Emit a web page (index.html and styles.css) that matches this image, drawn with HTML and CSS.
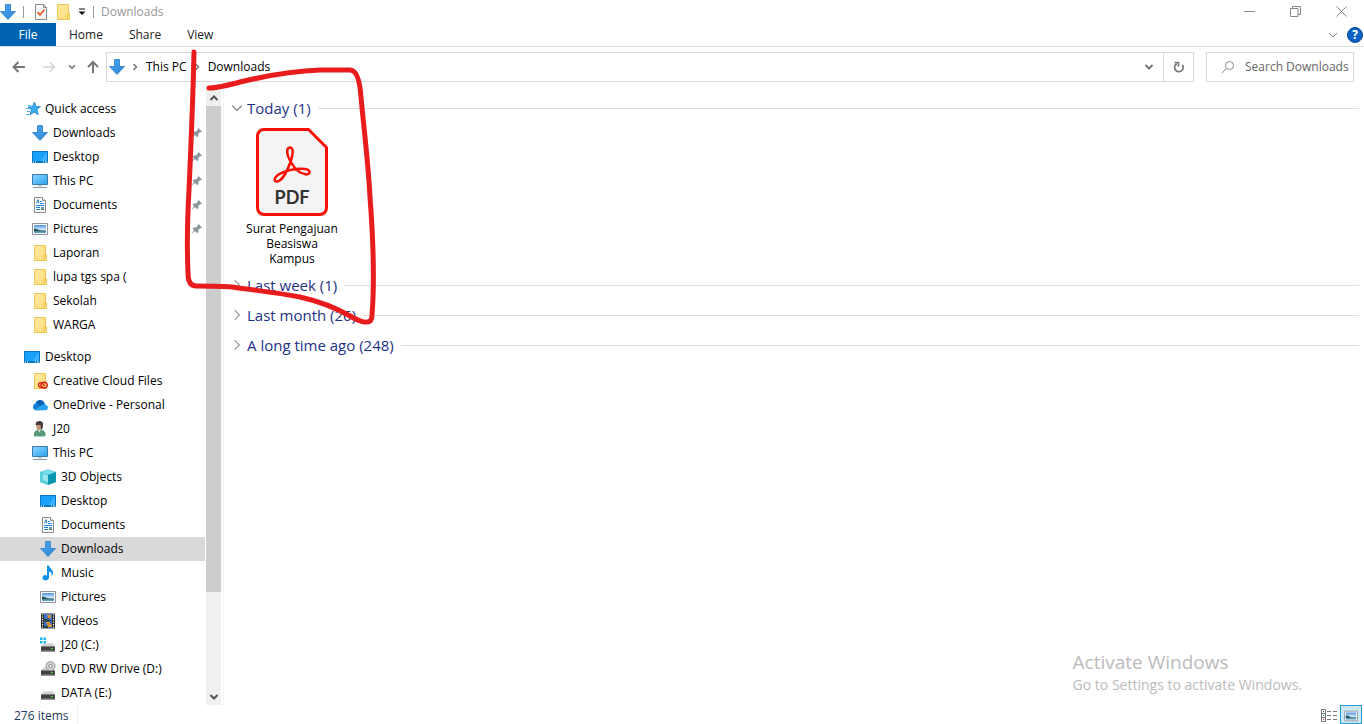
FILE: index.html
```html
<!DOCTYPE html>
<html lang="en">
<head>
<meta charset="utf-8">
<title>Downloads</title>
<meta name="viewport" content="width=device-width, initial-scale=1">
<link rel="stylesheet" href="styles.css">
</head>
<body>
<svg class="sprite" aria-hidden="true">
  <defs>
    <linearGradient id="g-arrow" x1="0" y1="0" x2="1" y2="1"><stop offset="0" stop-color="#4aa8f0"/><stop offset="1" stop-color="#2b86d8"/></linearGradient>
    <linearGradient id="g-screen" x1="0" y1="0" x2="1" y2="1"><stop offset="0" stop-color="#8fd3fb"/><stop offset=".5" stop-color="#5bbcf8"/><stop offset="1" stop-color="#2ea3f2"/></linearGradient>
    <linearGradient id="g-folder" x1="0" y1="0" x2="1" y2="1"><stop offset="0" stop-color="#ffeaa0"/><stop offset="1" stop-color="#fbdc7c"/></linearGradient>
    <linearGradient id="g-photo" x1="0" y1="0" x2="0" y2="1"><stop offset="0" stop-color="#4c8fe6"/><stop offset=".6" stop-color="#d8f0fa"/><stop offset=".8" stop-color="#8fc3dc"/><stop offset="1" stop-color="#4c93c0"/></linearGradient>
    <linearGradient id="g-drive" x1="0" y1="0" x2="0" y2="1"><stop offset="0" stop-color="#e4e4e4"/><stop offset="1" stop-color="#bdbdbd"/></linearGradient>
    <symbol id="i-down" viewBox="0 0 16 16"><path d="M5.5.5h5v7h5L8 15.5.5 7.500h5z" fill="url(#g-arrow)" stroke="#2c7fc9" stroke-width=".8"/></symbol>
    <symbol id="i-desktop" viewBox="0 0 16 16"><path d="M0 2h16v12H0z" fill="#0a76c4"/><path d="M1 3h14v9H1z" fill="#19a0fb"/><path d="M8 12 15 3v9z" fill="#3ab0ff"/><path d="M1 13h1M3 13h1M11 13h1M13 13h2" stroke="#fff"/></symbol>
    <symbol id="i-pc" viewBox="0 0 16 16"><path d="M.5 1.500h15v10H.5z" fill="url(#g-screen)" stroke="#3a7ca8"/><path d="M6 12h4v1.500H6z" fill="#b7c6d1"/><path d="M1 14.500h14" stroke="#8299a9"/></symbol>
    <symbol id="i-doc" viewBox="0 0 16 16"><path d="M2.500.5h8l3 3v12h-11z" fill="#fff" stroke="#8b8b8b"/><path d="M10.500.5v3h3" fill="#eee" stroke="#8b8b8b"/><path d="m4.500 6.500 1.500-4 1 4M8 4.500h2M8 6.500h4M4 8.500h8M4 10.500h4M4 12.500h4" stroke="#2483cf" fill="none"/><path d="M9 10h3v1.500H9z" fill="#4d9be0"/><path d="M9 11.500h3V13H9z" fill="#3d8068"/></symbol>
    <symbol id="i-pic" viewBox="0 0 16 16"><path d="M.5 2.500h15v11H.5z" fill="#fff" stroke="#8d949b"/><path d="M2 4h12v8H2z" fill="url(#g-photo)"/><path d="M2 7.500q3 0 5 1.500 3 .8 7 .5v1H2z" fill="#21565c"/></symbol>
    <symbol id="i-folder" viewBox="0 0 16 16"><path d="M2.500.5h11v9h1v6h-12z" fill="url(#g-folder)" stroke="#ebc651"/><path d="M12.500 15V10.500h2" fill="none" stroke="#ebc651"/></symbol>
    <symbol id="i-star" viewBox="0 0 16 16"><path d="M8.500 1 10 5.500l4.500.2-3.600 2.900 1.300 5.200L8 11l-4 3 1.500-5L2 6l4.500-.4z" fill="#35adf0" stroke="#1478bd" stroke-width=".7"/><path d="M2 4.500h3M0 7.500h3M1 10.500h3M0 13.500h3" stroke="#4cb0ec"/></symbol>
    <symbol id="i-cc" viewBox="0 0 16 16"><use href="#i-folder"/><g fill="none" stroke="#e01b12" stroke-width="1.400"><path d="M11 10.500C9 8.800 6.300 10 6.400 12c.1 2.500 3 3 4.600 2.200"/><path d="M9 12.500c0-4 6-4.500 6.300-.5.200 3.500-4 3.700-5.300 2L8.300 12"/><path d="m10.800 11.300 2.200 1.700"/></g></symbol>
    <symbol id="i-cloud" viewBox="0 0 16 16"><path d="M3.500 6.500A4.800 4.800 0 0 1 12.500 6L14 10 4 11z" fill="#0762b4"/><path d="M3.500 13.200A3.400 3.400 0 1 1 5.500 6.500L12 13z" fill="#1281d8"/><path d="M2.500 13 10.500 7.500A3.500 3.500 0 0 1 15 8.800a2.500 2.500 0 0 1-1.800 4.400H3.500z" fill="#289ff0"/></symbol>
    <symbol id="i-user" viewBox="0 0 16 16"><path d="M2 15.500V12q1-3 4-3.500l3-.2q4 1.500 4.500 4.500v2.200q-5 1-8 .3z" fill="#559b79"/><path d="m5.500 8.500 2 3 1.500-3" fill="#e9e3d6"/><ellipse cx="7" cy="5" rx="2.800" ry="4" fill="#c29273"/><path d="M3.500 4q0-4 4-4t3.500 4q0 4-2 4.500L8.500 4z" fill="#4b3e38"/></symbol>
    <symbol id="i-cube" viewBox="0 0 16 16"><path d="m8 .5 8 2.500v10l-8 3-8-3V3z" fill="#19a7c0"/><path d="m8 .5 8 2.500-8 3-8-3z" fill="#76deec"/><path d="m0 3 8 3v10l-8-3z" fill="#5ccfdf"/><path d="m3 5 5 1.800V13l-5-2z" fill="#b8eef4" opacity=".7"/><path d="M8 6v10l8-3V3z" fill="#078fa9" opacity=".75"/></symbol>
    <symbol id="i-music" viewBox="0 0 16 16"><path d="M7 .5h2c.3 3 4.500 4 4 7.500 0 1.500-.8 2.500-1.500 3 .7-2.500-.5-4-2.500-4.500v6.300a3.300 2.600 0 1 1-2-2.400z" fill="#0d92e8"/></symbol>
    <symbol id="i-video" viewBox="0 0 16 16"><path d="M1 .5h14v15H1z" fill="#303236"/><path d="M4 1h8v6.500H4zM4 8.500h8V15H4z" fill="#3d72ca"/><path d="M2.500 1v14M13.500 1v14" stroke="#fff" stroke-dasharray="1.200 1.300"/><path d="M7 2h4v3H8zM6 9h4v2l2 1v2H8z" fill="#d9922e"/><path d="M4 6h5v1.500H4zM4 13h4v2H4z" fill="#274735"/></symbol>
    <symbol id="i-drive" viewBox="0 0 16 16"><path d="M3.500 6h9.500l2 4H1z" fill="url(#g-drive)"/><path d="M1 9.500h14v5H1z" fill="#424242"/><path d="M1 14h14" stroke="#8b8b8b"/><path d="M11 11.500h2" stroke="#40e052"/></symbol>
    <symbol id="i-windrive" viewBox="0 0 16 16"><use href="#i-drive"/><path d="M0 0h7v7H0z" fill="#fff"/><path d="M0 .5h2.500V3H0zM3.500.5H6V3H3.500zM0 4h2.500v2.500H0zM3.500 4H6v2.500H3.500z" fill="#1ab7ea"/></symbol>
    <symbol id="i-dvd" viewBox="0 0 16 16"><use href="#i-drive"/><circle cx="10.500" cy="5" r="4.500" fill="#d1d4d6" stroke="#999"/><circle cx="10.500" cy="5" r="1.600" fill="#fff" stroke="#888"/></symbol>
    <symbol id="i-pin" viewBox="0 0 12 12"><path d="m7.500 1 3.500 3.500-1 .8-.8-.2L7.300 7v2.300l-1 .9L4 8 .5 11.500 3 7 1.500 5.500l1-1h2.300L6.900 2.700l-.2-.8z" fill="#8b979f"/></symbol>
    <symbol id="i-props" viewBox="0 0 16 16"><path d="M2.500.5h8l3 3v12h-11z" fill="#f7f7f9" stroke="#8a8a8a"/><path d="M10.500.5v3h3" fill="none" stroke="#8a8a8a"/><path d="m4.500 8 2.500 3 4.500-5.500" fill="none" stroke="#e8581c" stroke-width="1.700"/></symbol>
    <symbol id="i-chev" viewBox="0 0 10 10"><path d="m1 3 4 4 4-4" fill="none" stroke="currentColor"/></symbol>
    <symbol id="i-chevb" viewBox="0 0 10 10"><path d="m1.500 3 3.500 3.500L8.500 3" fill="none" stroke="currentColor" stroke-width="2"/></symbol>
    <symbol id="i-right" viewBox="0 0 10 10"><path d="m3.500 2 3 3-3 3" fill="none" stroke="currentColor" stroke-width="1.500"/></symbol>
  </defs>
</svg>

<div class="window">
  <header class="titlebar">
    <svg class="icon"><use href="#i-down"/></svg>
    <span class="bar"></span>
    <button class="quick" aria-label="Properties"><svg class="icon"><use href="#i-props"/></svg></button>
    <button class="quick" aria-label="New folder"><svg class="icon"><use href="#i-folder"/></svg></button>
    <button class="quick quick-more" aria-label="Customize toolbar"><svg width="8" height="8" viewBox="0 0 8 8"><path d="M1 1h6" stroke="#111" stroke-width="1"/><path d="M.5 3.500h7L4 7z" fill="#111"/></svg></button>
    <span class="bar bar-title"></span>
    <h1 class="title">Downloads</h1>
    <div class="controls">
      <button aria-label="Minimize"><svg width="11" height="11"><path d="M0 5.500h11" stroke="#888"/></svg></button>
      <button aria-label="Restore"><svg width="11" height="11" fill="none" stroke="#888"><path d="M.5 2.500h7.500v8H.5zM2.500 2.500v-2h8v8H8"/></svg></button>
      <button aria-label="Close"><svg width="11" height="11" stroke="#888"><path d="m.5.5 10 10M10.500.5l-10 10"/></svg></button>
    </div>
  </header>

  <nav class="ribbon" aria-label="Ribbon">
    <button class="tab tab-file">File</button>
    <button class="tab">Home</button>
    <button class="tab">Share</button>
    <button class="tab">View</button>
    <button class="expand" aria-label="Expand ribbon"><svg class="chev"><use href="#i-chev"/></svg></button>
    <button class="help" aria-label="Help">?</button>
  </nav>

  <div class="toolbar">
    <div class="history">
      <button aria-label="Back"><svg width="14" height="12" fill="none" stroke="#777" stroke-width="2"><path d="M1.500 6H13M6.500 1 1.500 6l5 5"/></svg></button>
      <button aria-label="Forward"><svg width="14" height="12" fill="none" stroke="#d6d6d6" stroke-width="1.500"><path d="M1 6h11.500M7.500 1l5 5-5 5"/></svg></button>
      <button class="recent" aria-label="Recent locations"><svg width="8" height="8" viewBox="0 0 10 10"><use href="#i-chevb"/></svg></button>
      <button class="up" aria-label="Up"><svg width="12" height="14" fill="none" stroke="#777" stroke-width="2"><path d="M6 13V2M1 7l5-5 5 5"/></svg></button>
    </div>
    <div class="address">
      <svg class="icon"><use href="#i-down"/></svg>
      <svg class="crumb-sep"><use href="#i-right"/></svg>
      <a href="#pc">This PC</a>
      <svg class="crumb-sep"><use href="#i-right"/></svg>
      <a href="#downloads">Downloads</a>
      <button class="drop" aria-label="Previous locations"><svg class="chev"><use href="#i-chevb"/></svg></button>
      <button class="refresh" aria-label="Refresh"><svg width="12" height="12" fill="none" stroke="#777" stroke-width="1.700"><path d="M9.300 3.800a4.300 4.300 0 1 1-5.600-1.100"/><path d="M1.500 1.500h4v4"/></svg></button>
    </div>
    <label class="search">
      <svg width="14" height="14" fill="none" stroke="#8a8a8a"><circle cx="8.500" cy="5.500" r="4"/><path d="M5.700 8.300.8 13.200"/></svg>
      <input type="text" placeholder="Search Downloads" aria-label="Search Downloads">
    </label>
  </div>

  <div class="body">
    <nav class="tree" aria-label="Folders">
      <ul class="branch">
        <li><a class="star" href="#quick"><svg class="icon"><use href="#i-star"/></svg>Quick access</a></li>
        <li><a class="l2" href="#q1"><svg class="icon"><use href="#i-down"/></svg>Downloads<svg class="pin"><use href="#i-pin"/></svg></a></li>
        <li><a class="l2" href="#q2"><svg class="icon"><use href="#i-desktop"/></svg>Desktop<svg class="pin"><use href="#i-pin"/></svg></a></li>
        <li><a class="l2" href="#q3"><svg class="icon"><use href="#i-pc"/></svg>This PC<svg class="pin"><use href="#i-pin"/></svg></a></li>
        <li><a class="l2" href="#q4"><svg class="icon"><use href="#i-doc"/></svg>Documents<svg class="pin"><use href="#i-pin"/></svg></a></li>
        <li><a class="l2" href="#q5"><svg class="icon"><use href="#i-pic"/></svg>Pictures<svg class="pin"><use href="#i-pin"/></svg></a></li>
        <li><a class="l2" href="#q6"><svg class="icon"><use href="#i-folder"/></svg>Laporan</a></li>
        <li><a class="l2" href="#q7"><svg class="icon"><use href="#i-folder"/></svg>lupa tgs spa (</a></li>
        <li><a class="l2" href="#q8"><svg class="icon"><use href="#i-folder"/></svg>Sekolah</a></li>
        <li><a class="l2" href="#q9"><svg class="icon"><use href="#i-folder"/></svg>WARGA</a></li>
      </ul>
      <ul class="branch">
        <li><a href="#d0"><svg class="icon"><use href="#i-desktop"/></svg>Desktop</a></li>
        <li><a class="l2" href="#d1"><svg class="icon"><use href="#i-cc"/></svg>Creative Cloud Files</a></li>
        <li><a class="l2" href="#d2"><svg class="icon"><use href="#i-cloud"/></svg>OneDrive - Personal</a></li>
        <li><a class="l2" href="#d3"><svg class="icon"><use href="#i-user"/></svg>J20</a></li>
        <li><a class="l2" href="#pc"><svg class="icon"><use href="#i-pc"/></svg>This PC</a></li>
        <li><a class="l3" href="#p1"><svg class="icon"><use href="#i-cube"/></svg>3D Objects</a></li>
        <li><a class="l3" href="#p2"><svg class="icon"><use href="#i-desktop"/></svg>Desktop</a></li>
        <li><a class="l3" href="#p3"><svg class="icon"><use href="#i-doc"/></svg>Documents</a></li>
        <li><a class="l3 selected" href="#downloads" aria-current="page"><svg class="icon"><use href="#i-down"/></svg>Downloads</a></li>
        <li><a class="l3" href="#p5"><svg class="icon"><use href="#i-music"/></svg>Music</a></li>
        <li><a class="l3" href="#p6"><svg class="icon"><use href="#i-pic"/></svg>Pictures</a></li>
        <li><a class="l3" href="#p7"><svg class="icon"><use href="#i-video"/></svg>Videos</a></li>
        <li><a class="l3" href="#p8"><svg class="icon"><use href="#i-windrive"/></svg>J20 (C:)</a></li>
        <li><a class="l3" href="#p9"><svg class="icon"><use href="#i-dvd"/></svg>DVD RW Drive (D:)</a></li>
        <li><a class="l3" href="#p10"><svg class="icon"><use href="#i-drive"/></svg>DATA (E:)</a></li>
      </ul>
    </nav>
    <div class="scroll">
      <button aria-label="Scroll up"><svg class="chev flip"><use href="#i-chevb"/></svg></button>
      <div class="track"><div class="thumb"></div></div>
      <button aria-label="Scroll down"><svg class="chev"><use href="#i-chevb"/></svg></button>
    </div>
    <main class="files">
      <section>
        <h2 class="group"><button><svg class="caret"><use href="#i-chev"/></svg>Today (1)</button></h2>
        <a class="file" href="#file">
          <svg width="72" height="88" viewBox="0 0 72 88">
            <path d="M8 1.500h44.500L70.500 19.500V80a6.500 6.500 0 0 1-6.500 6.500H8A6.500 6.500 0 0 1 1.500 80V8A6.500 6.500 0 0 1 8 1.500z" fill="#f4f4f4" stroke="#fa0f00" stroke-width="3"/>
            <path d="M34 19.500C29.500 20 31 27 34 32.500 38 40 44 46 50.500 46.500 55 46.500 54.500 41.500 49 41 40 40 29 42.500 22.500 46.500 18 49.500 17.500 53.500 21 53.500 26.500 53 32 41 34.500 34 37 27 38 19.500 34 19.500z" fill="none" stroke="#fa0f00" stroke-width="2.500" stroke-linejoin="round"/>
            <text class="pdf" x="36" y="76" text-anchor="middle">PDF</text>
          </svg>
          <span>Surat Pengajuan Beasiswa Kampus</span>
        </a>
      </section>
      <h2 class="group"><button><svg class="caret closed"><use href="#i-chev"/></svg>Last week (1)</button></h2>
      <h2 class="group"><button><svg class="caret closed"><use href="#i-chev"/></svg>Last month (26)</button></h2>
      <h2 class="group"><button><svg class="caret closed"><use href="#i-chev"/></svg>A long time ago (248)</button></h2>
    </main>
  </div>

  <footer class="status">
    <span class="count">276 items</span>
    <div class="views">
      <button aria-label="Details view"><svg width="17" height="13" fill="none" stroke="#777"><path d="M.5.5h4v12h-4zM.5 4.500h4M.5 8.500h4M6 2.500h4M12 2.500h4M6 6.500h4M12 6.500h4M6 10.500h4M12 10.500h4"/><path d="M2 2.500h1M2 6.500h1" stroke="#357"/><path d="M2 10.500h1" stroke="#d33"/></svg></button>
      <button class="active" aria-label="Large icons view"><svg width="14" height="14" viewBox="0 0 16 16"><use href="#i-pic"/></svg></button>
    </div>
  </footer>

  <aside class="watermark">
    <p class="wm-title">Activate Windows</p>
    <p class="wm-text">Go to Settings to activate Windows.</p>
  </aside>
  <svg class="marker" width="400" height="340" viewBox="0 0 400 340" aria-hidden="true">
    <path d="M194 52C193 100 191 145 189 190C187 225 187 250 188 273Q188 286 196 286C210 286 222 286 232 287C260 291 280 293 300 297C322 302 338 309 350 316Q362 323 367 322Q372 322 372 315C374 290 374 250 370 197C368 160 364 130 361 97Q359 70 350 70H320C290 71 265 76 240 82Q218 88 209 88"/>
  </svg>
</div>
</body>
</html>
```
FILE: styles.css
```css
* { box-sizing: border-box; }

body {
  margin: 0;
  background: #fff;
  color: #000;
  font: 12px/16px "Open Sans", "Noto Sans", sans-serif;
}

button, input {
  margin: 0;
  padding: 0;
  border: 0;
  background: none;
  color: inherit;
  font: inherit;
}

button { display: flex; align-items: center; justify-content: center; }
a { color: inherit; text-decoration: none; }
h1, h2, p, ul { margin: 0; padding: 0; font-weight: 400; }
ul { list-style: none; }
svg { display: block; flex: none; }

.sprite { position: absolute; width: 0; height: 0; }
.icon { width: 16px; height: 16px; }
.chev { width: 10px; height: 10px; }
.flip { transform: rotate(180deg); }

.window {
  position: relative;
  display: flex;
  flex-direction: column;
  height: 100vh;
  overflow: hidden;
}

.titlebar { display: flex; align-items: center; height: 23px; }
.bar { width: 1px; height: 12px; margin: 0 8px 0 7px; background: #999; }
.quick { width: 16px; height: 16px; margin-right: 6px; }
.titlebar .quick:first-of-type { margin-left: 1px; }
.quick-more { width: 10px; margin: 0; }
.bar-title { margin: 0 7px 0 6px; }
.title { color: #999; font-size: 12px; line-height: 16px; }
.controls { display: flex; margin-left: auto; }
.controls button { width: 46px; height: 20px; }

.ribbon { display: flex; height: 24px; border-bottom: 1px solid #dadbdc; color: #222; }
.tab { padding: 0 13px; }
.tab-file { width: 56px; padding: 0; background: #0063b1; color: #fff; }
.expand { width: 24px; margin-left: auto; margin-right: 2px; color: #888; }
.help {
  align-self: center;
  width: 16px;
  height: 16px;
  margin-right: 1px;
  border: 1px solid #0a4a94;
  border-radius: 50%;
  background: #0a63c4;
  color: #fff;
  font-weight: 700;
  line-height: 14px;
}

.toolbar { display: flex; align-items: center; height: 40px; padding-right: 10px; }
.history { display: flex; align-items: center; width: 106px; padding-left: 4px; color: #777; }
.history button { width: 30px; height: 30px; }
.history .recent { width: 16px; }
.history .up { width: 26px; }
.address { display: flex; align-items: center; flex: 1; height: 30px; padding-left: 2px; border: 1px solid #d9d9d9; }
.crumb-sep { width: 10px; height: 10px; margin: 0 6px 0 5px; color: #777; }
.drop { width: 29px; height: 28px; margin-left: auto; color: #777; }
.refresh { width: 30px; height: 28px; border-left: 1px solid #d9d9d9; }
.search {
  display: flex;
  align-items: center;
  gap: 10px;
  width: 148px;
  height: 30px;
  margin-left: 12px;
  padding-left: 14px;
  border: 1px solid #d9d9d9;
}
.search input { flex: 1; min-width: 0; outline: 0; }
.search input::placeholder { color: #666; opacity: 1; }

.body { display: flex; flex: 1; min-height: 0; padding-top: 3px; }
.tree { width: 205px; overflow: hidden; padding-top: 7px; }
.branch { margin-bottom: 8px; }
.branch a { display: flex; align-items: center; gap: 5px; height: 24px; padding: 0 2px 0 24px; white-space: nowrap; }
.branch .star { gap: 3px; padding-left: 26px; }
.branch .l2 { padding-left: 32px; }
.branch .l3 { padding-left: 40px; }
.branch .selected { background: #d9d9d9; }
.pin { width: 12px; height: 12px; margin-left: auto; }

.scroll { display: flex; flex-direction: column; width: 15px; margin-left: 1px; background: #f0f0f0; color: #555; }
.scroll button { height: 16px; }
.track { flex: 1; }
.thumb { height: 83.4%; background: #cdcdcd; }

.files { flex: 1; min-width: 0; margin-left: 2px; padding: 3px 5px 0 7px; border-left: 1px solid #f5f5f5; }
.group { display: flex; align-items: center; gap: 7px; height: 30px; color: #1e3287; font-size: 15px; line-height: 20px; }
.group::after { flex: 1; height: 1px; background: #dfdfdf; content: ""; }
.group button { gap: 4px; }
.caret { width: 12px; height: 12px; color: #777; }
.closed { transform: rotate(-90deg); color: #999; }
.file { display: flex; flex-direction: column; align-items: center; width: 100px; margin: 5px 0 4px 11px; line-height: 15px; text-align: center; }
.file span { width: 94px; margin-top: 5px; }
.pdf { fill: #333; font: 700 18px Lato, sans-serif; }

.status { display: flex; align-items: center; height: 19px; color: #1e395b; }
.count { margin-left: 14px; padding: 3px 8px 0 0; border-right: 1px solid #eee; }
.views { display: flex; align-self: stretch; margin-left: auto; margin-right: 2px; }
.views button { width: 22px; padding-top: 2px; }
.views .active { border: 1px solid #2a9bd5; background: #cce8f7; }

.watermark { position: absolute; right: 62px; bottom: 29px; color: #bbb; }
.wm-title { font-size: 19px; line-height: 26px; }
.wm-text { font-size: 14px; line-height: 20px; }

.marker { position: absolute; top: 0; left: 0; fill: none; stroke: #e81c1c; stroke-width: 5; stroke-linecap: round; stroke-linejoin: round; pointer-events: none; }
```
